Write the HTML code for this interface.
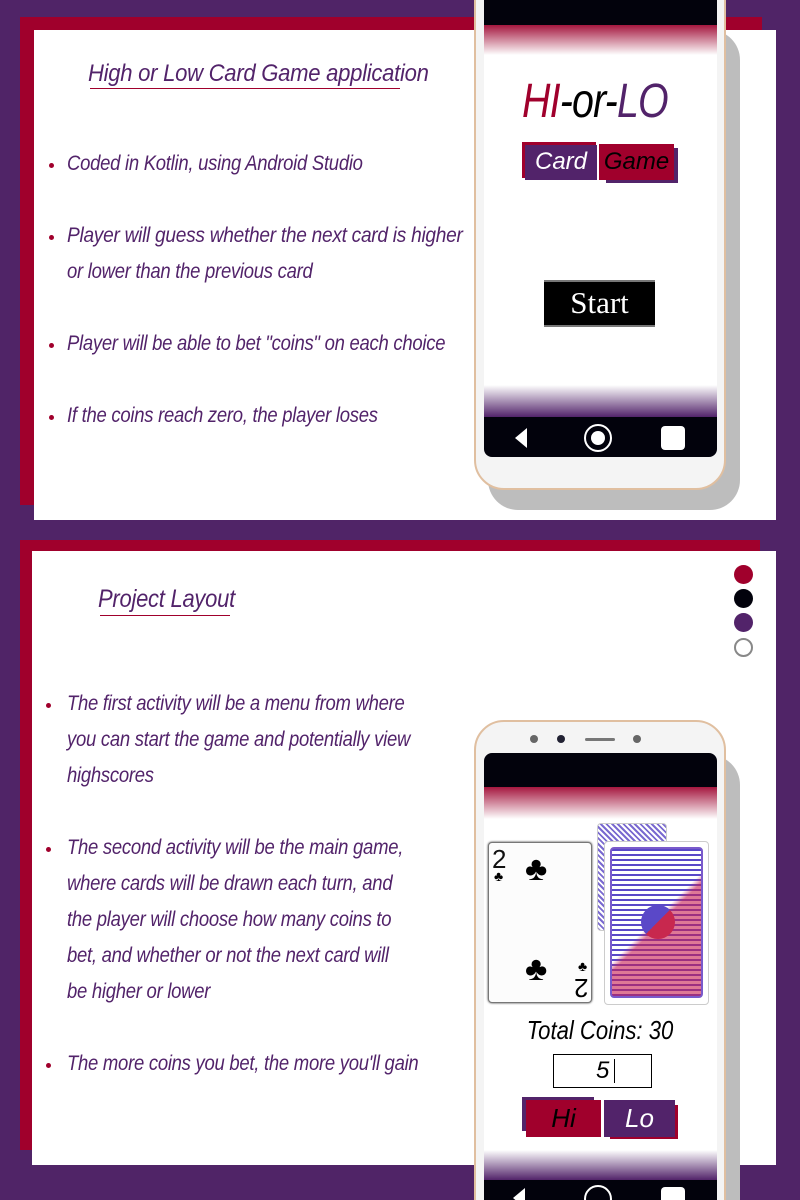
<!DOCTYPE html>
<html><head><meta charset="utf-8"><style>
*{margin:0;padding:0;box-sizing:border-box}
html{width:800px;height:1200px;overflow:hidden}
body{width:800px;height:1200px;background:#502467;position:relative;overflow:hidden;font-family:"Liberation Sans Narrow","Liberation Sans",sans-serif}
.a{position:absolute}
.t{position:absolute;color:#52236a;font-style:italic;font-size:21px;white-space:nowrap;transform:scaleX(.88);transform-origin:left center;letter-spacing:-.3px}
.b{position:absolute;width:5px;height:5px;border-radius:50%;background:#a0002c}
.ph{position:absolute;border-radius:30px;background:#f4f4f4;border:2px solid #e0bfa0}
.sh{position:absolute;background:#bdbdbd;border-radius:30px}
</style></head><body>
<!-- slide1 -->
<div class="a" style="left:20px;top:17px;width:742px;height:13px;background:#a0002c"></div>
<div class="a" style="left:20px;top:17px;width:14px;height:488px;background:#a0002c"></div>
<div class="a" style="left:34px;top:30px;width:742px;height:490px;background:#fff"></div>
<div class="t" style="left:88px;top:60px;font-size:24px;transform:scaleX(.92)">High or Low Card Game application</div>
<div class="a" style="left:90px;top:88px;width:310px;height:1px;background:#a0002c"></div>
<div class="b" style="left:49px;top:163px"></div><div class="t" style="left:67px;top:152px">Coded in Kotlin, using Android Studio</div>
<div class="b" style="left:49px;top:235px"></div><div class="t" style="left:67px;top:224px;transform:scaleX(.91)">Player will guess whether the next card is higher</div>
<div class="t" style="left:67px;top:260px">or lower than the previous card</div>
<div class="b" style="left:49px;top:343px"></div><div class="t" style="left:67px;top:332px">Player will be able to bet "coins" on each choice</div>
<div class="b" style="left:49px;top:415px"></div><div class="t" style="left:67px;top:404px">If the coins reach zero, the player loses</div>
<!-- phone1 -->
<div class="sh" style="left:488px;top:30px;width:252px;height:480px"></div>
<div class="ph" style="left:474px;top:-30px;width:252px;height:520px"></div>
<div class="a" style="left:484px;top:0;width:233px;height:457px;background:#fff;border-radius:0 0 8px 8px;overflow:hidden">
 <div class="a" style="left:0;top:0;width:100%;height:25px;background:#02020c"></div>
 <div class="a" style="left:0;top:25px;width:100%;height:30px;background:linear-gradient(#a5173f,#fff)"></div>
 <div class="a" style="left:0;top:385px;width:100%;height:32px;background:linear-gradient(#fff,#52236a)"></div>
 <div class="a" style="left:0;top:417px;width:100%;height:40px;background:#02020c"></div>
 <div class="a" style="left:31px;top:428px;width:0;height:0;border-top:10px solid transparent;border-bottom:10px solid transparent;border-right:12px solid #fff"></div>
 <div class="a" style="left:100px;top:424px;width:28px;height:28px;border-radius:50%;border:2px solid #fff"></div>
 <div class="a" style="left:107px;top:431px;width:14px;height:14px;border-radius:50%;background:#fff"></div>
 <div class="a" style="left:177px;top:426px;width:24px;height:24px;border-radius:4px;background:#fff"></div>
</div>
<div class="a" style="left:522px;top:74px;font-style:italic;font-size:48px;white-space:nowrap;transform:scaleX(.82);transform-origin:left;letter-spacing:-1px"><span style="color:#a0002c">HI</span><span style="color:#000">-or-</span><span style="color:#52236a">LO</span></div>
<div class="a" style="left:522px;top:142px;width:74px;height:36px;background:#a0002c"></div>
<div class="a" style="left:525px;top:145px;width:72px;height:35px;background:#52236a;color:#fff;font-style:italic;font-size:24px;text-align:center;line-height:34px">Card</div>
<div class="a" style="left:606px;top:148px;width:72px;height:35px;background:#52236a"></div>
<div class="a" style="left:599px;top:144px;width:75px;height:36px;background:#a0002c;color:#000;font-style:italic;font-size:24px;text-align:center;line-height:36px">Game</div>
<div class="a" style="left:544px;top:280px;width:111px;height:47px;background:#000;border-top:2px solid #777;border-bottom:2px solid #777;color:#fff;font-family:'Liberation Serif',serif;font-size:31px;text-align:center;line-height:42px">Start</div>
<!-- slide2 -->
<div class="a" style="left:20px;top:540px;width:740px;height:12px;background:#a0002c"></div>
<div class="a" style="left:20px;top:540px;width:12px;height:610px;background:#a0002c"></div>
<div class="a" style="left:32px;top:551px;width:744px;height:614px;background:#fff"></div>
<div class="t" style="left:98px;top:585px;font-size:25px">Project Layout</div>
<div class="a" style="left:100px;top:615px;width:130px;height:1px;background:#a0002c"></div>
<div class="a" style="left:734px;top:565px;width:19px;height:19px;border-radius:50%;background:#a0002c"></div>
<div class="a" style="left:734px;top:589px;width:19px;height:19px;border-radius:50%;background:#02020c"></div>
<div class="a" style="left:734px;top:613px;width:19px;height:19px;border-radius:50%;background:#52236a"></div>
<div class="a" style="left:734px;top:638px;width:19px;height:19px;border-radius:50%;border:2px solid #888"></div>
<div class="b" style="left:46px;top:703px"></div><div class="t" style="left:67px;top:692px">The first activity will be a menu from where</div>
<div class="t" style="left:67px;top:728px">you can start the game and potentially view</div>
<div class="t" style="left:67px;top:764px">highscores</div>
<div class="b" style="left:46px;top:847px"></div><div class="t" style="left:67px;top:836px">The second activity will be the main game,</div>
<div class="t" style="left:67px;top:872px">where cards will be drawn each turn, and</div>
<div class="t" style="left:67px;top:908px">the player will choose how many coins to</div>
<div class="t" style="left:67px;top:944px">bet, and whether or not the next card will</div>
<div class="t" style="left:67px;top:980px">be higher or lower</div>
<div class="b" style="left:46px;top:1063px"></div><div class="t" style="left:67px;top:1052px">The more coins you bet, the more you'll gain</div>
<!-- phone2 -->
<div class="sh" style="left:488px;top:755px;width:252px;height:500px"></div>
<div class="ph" style="left:474px;top:720px;width:252px;height:520px"></div>
<div class="a" style="left:530px;top:735px;width:8px;height:8px;border-radius:50%;background:#666"></div>
<div class="a" style="left:557px;top:735px;width:8px;height:8px;border-radius:50%;background:#223"></div>
<div class="a" style="left:585px;top:738px;width:30px;height:3px;border-radius:2px;background:#777"></div>
<div class="a" style="left:633px;top:735px;width:8px;height:8px;border-radius:50%;background:#666"></div>
<div class="a" style="left:484px;top:753px;width:233px;height:460px;background:#fff;border-radius:8px 8px 0 0;overflow:hidden">
 <div class="a" style="left:0;top:0;width:100%;height:34px;background:#02020c"></div>
 <div class="a" style="left:0;top:34px;width:100%;height:32px;background:linear-gradient(#a5173f,#fff)"></div>
 <div class="a" style="left:0;top:397px;width:100%;height:30px;background:linear-gradient(#fff,#52236a)"></div>
 <div class="a" style="left:0;top:427px;width:100%;height:40px;background:#02020c"></div>
</div>
<!-- cards -->
<div class="a" style="left:597px;top:823px;width:70px;height:108px;border:1px solid #ccc;border-radius:4px;background:repeating-linear-gradient(45deg,#7a6ad0 0 2px,#fff 2px 4px)"></div>
<div class="a" style="left:488px;top:842px;width:104px;height:161px;border:1px solid #777;border-radius:4px;background:#fcfcfc;box-shadow:0 0 2px #333"></div>
<div class="a" style="left:492px;top:844px;font-size:26px;color:#111">2</div>
<div class="a" style="left:494px;top:868px;font-size:14px">♣</div>
<div class="a" style="left:525px;top:850px;font-size:34px">♣</div>
<div class="a" style="left:525px;top:950px;font-size:34px">♣</div>
<div class="a" style="left:578px;top:958px;font-size:14px">♣</div>
<div class="a" style="left:574px;top:972px;font-size:26px;transform:rotate(180deg)">2</div>
<div class="a" style="left:604px;top:841px;width:105px;height:164px;border:1px solid #ccc;border-radius:4px;background:#fff"></div>
<div class="a" style="left:610px;top:847px;width:93px;height:151px;border-radius:4px;background:linear-gradient(135deg,transparent 48%,rgba(200,30,80,.6) 52%),repeating-linear-gradient(0deg,#5a48c8 0 2px,#fff 2px 5px),repeating-linear-gradient(90deg,#5a48c8 0 2px,#fff 2px 5px);border:2px solid #7a5acb"></div>
<div class="a" style="left:641px;top:905px;width:34px;height:34px;border-radius:50%;background:linear-gradient(135deg,#5a48c8 50%,#c8284e 50%)"></div>
<div class="a" style="left:500px;top:1015px;width:200px;text-align:center;font-style:italic;font-size:26px;color:#000;white-space:nowrap;transform:scaleX(.85)">Total Coins: 30</div>
<div class="a" style="left:553px;top:1054px;width:99px;height:34px;border:1px solid #000;font-style:italic;font-size:24px;line-height:32px;text-align:left;padding-left:42px">5</div>
<div class="a" style="left:614px;top:1059px;width:1px;height:24px;background:#000"></div>
<div class="a" style="left:522px;top:1097px;width:72px;height:34px;background:#52236a"></div>
<div class="a" style="left:526px;top:1100px;width:75px;height:37px;background:#a0002c;color:#000;font-style:italic;font-size:26px;text-align:center;line-height:36px">Hi</div>
<div class="a" style="left:610px;top:1105px;width:68px;height:34px;background:#a0002c"></div>
<div class="a" style="left:604px;top:1100px;width:71px;height:37px;background:#52236a;color:#fff;font-style:italic;font-size:26px;text-align:center;line-height:36px">Lo</div>
<div class="a" style="left:513px;top:1188px;width:0;height:0;border-top:10px solid transparent;border-bottom:10px solid transparent;border-right:12px solid #fff"></div>
<div class="a" style="left:584px;top:1185px;width:28px;height:28px;border-radius:50%;border:2px solid #fff"></div>
<div class="a" style="left:661px;top:1187px;width:24px;height:24px;border-radius:4px;background:#fff"></div>
</body></html>
